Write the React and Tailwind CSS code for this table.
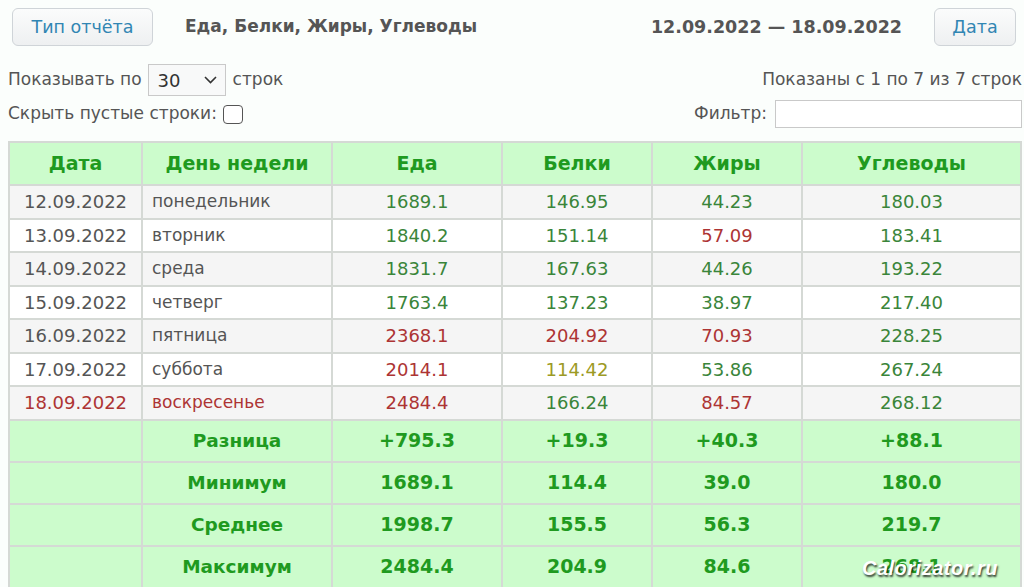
import React from 'react';

const GREEN = 'text-[#3a853a]';
const RED = 'text-[#ad3434]';
const OLIVE = 'text-[#9c9a25]';

// Строки отчёта: дата, день, значения и их цвета
const rows = [
  { date: '12.09.2022', day: 'понедельник', vals: ['1689.1', '146.95', '44.23', '180.03'], colors: [GREEN, GREEN, GREEN, GREEN] },
  { date: '13.09.2022', day: 'вторник', vals: ['1840.2', '151.14', '57.09', '183.41'], colors: [GREEN, GREEN, RED, GREEN] },
  { date: '14.09.2022', day: 'среда', vals: ['1831.7', '167.63', '44.26', '193.22'], colors: [GREEN, GREEN, GREEN, GREEN] },
  { date: '15.09.2022', day: 'четверг', vals: ['1763.4', '137.23', '38.97', '217.40'], colors: [GREEN, GREEN, GREEN, GREEN] },
  { date: '16.09.2022', day: 'пятница', vals: ['2368.1', '204.92', '70.93', '228.25'], colors: [RED, RED, RED, GREEN] },
  { date: '17.09.2022', day: 'суббота', vals: ['2014.1', '114.42', '53.86', '267.24'], colors: [RED, OLIVE, GREEN, GREEN] },
  { date: '18.09.2022', day: 'воскресенье', vals: ['2484.4', '166.24', '84.57', '268.12'], colors: [RED, GREEN, RED, GREEN], holiday: true },
];

const summary = [
  { label: 'Разница', vals: ['+795.3', '+19.3', '+40.3', '+88.1'] },
  { label: 'Минимум', vals: ['1689.1', '114.4', '39.0', '180.0'] },
  { label: 'Среднее', vals: ['1998.7', '155.5', '56.3', '219.7'] },
  { label: 'Максимум', vals: ['2484.4', '204.9', '84.6', '268.1'] },
];

const headers = ['Дата', 'День недели', 'Еда', 'Белки', 'Жиры', 'Углеводы'];

const TopButton = ({ children, className = '' }) => (
  <button className={`h-[38px] rounded-md border border-[#cfd4d8] bg-gradient-to-b from-[#fbfcfc] to-[#eef0f1] text-[17.5px] text-[#3186b3] ${className}`}>
    {children}
  </button>
);

export default function App() {
  return (
    <div className="relative h-[587px] w-[1024px] overflow-hidden bg-[#fbfefc] text-[#555] font-['DejaVu_Sans',Verdana,sans-serif]">
      {/* Верхняя панель */}
      <div className="flex items-center pl-3 pr-2 pt-[8px]">
        <TopButton className="w-[141px]">Тип отчёта</TopButton>
        <div className="ml-[32px] text-[17px] font-bold text-[#555]">Еда, Белки, Жиры, Углеводы</div>
        <div className="ml-auto text-[17.5px] font-bold text-[#555]">12.09.2022 — 18.09.2022</div>
        <TopButton className="ml-[32px] w-[82px]">Дата</TopButton>
      </div>

      {/* Настройки */}
      <div className="mt-[18px] flex items-center justify-between pl-2 pr-[2px] text-[17px]">
        <div className="flex items-center">
          <span>Показывать по</span>
          <div className="ml-[6px] flex h-[32px] w-[78px] items-center justify-between border border-[#c9c9c9] bg-[#f8f9f9] pl-[9px] pr-[8px] text-[18px] text-[#333]">
            <span>30</span>
            <svg width="13" height="8" viewBox="0 0 13 8" fill="none" stroke="#333" strokeWidth="1.6">
              <path d="M1 1l5.5 5.5L12 1" />
            </svg>
          </div>
          <span className="ml-[7px]">строк</span>
        </div>
        <span>Показаны с 1 по 7 из 7 строк</span>
      </div>
      <div className="mt-[4px] flex items-center justify-between pl-2 pr-[2px] text-[17px]">
        <div className="flex items-center">
          <span>Скрыть пустые строки:</span>
          <span className="ml-[6px] inline-block h-[19px] w-[20px] rounded-[4px] border-[1.5px] border-[#555] bg-white" />
        </div>
        <div className="flex items-center">
          <span>Фильтр:</span>
          <div className="ml-[8px] h-[28px] w-[247px] border border-[#c9c9c9] bg-white" />
        </div>
      </div>

      {/* Таблица */}
      <table className="ml-2 mt-[13px] w-[1014px] table-fixed border-collapse border-2 border-[#d5d9d5] text-[17px]">
        <colgroup>
          <col className="w-[133px]" />
          <col className="w-[190px]" />
          <col className="w-[170px]" />
          <col className="w-[150px]" />
          <col className="w-[150px]" />
          <col />
        </colgroup>
        <thead>
          <tr className="h-[43px] bg-[#ccfccc]">
            {headers.map((h) => (
              <th key={h} className="border-2 border-[#d5d9d5] text-center text-[19px] font-bold text-[#1f9a1f]">{h}</th>
            ))}
          </tr>
        </thead>
        <tbody>
          {rows.map((r, i) => (
            <tr key={r.date} className={`h-[33.5px] ${i % 2 === 0 ? 'bg-[#f5f5f5]' : 'bg-white'}`}>
              <td className={`border-2 border-[#d5d9d5] text-center text-[18px] ${r.holiday ? RED : 'text-[#555]'}`}>{r.date}</td>
              <td className={`border-2 border-[#d5d9d5] pl-[9px] ${r.holiday ? RED : 'text-[#555]'}`}>{r.day}</td>
              {r.vals.map((v, j) => (
                <td key={j} className={`border-2 border-[#d5d9d5] text-center text-[18px] ${r.colors[j]}`}>{v}</td>
              ))}
            </tr>
          ))}
          {summary.map((s) => (
            <tr key={s.label} className="h-[42px] bg-[#ccfccc] font-bold text-[#1f9a1f]">
              <td className="border-2 border-[#d5d9d5]" />
              <td className="border-2 border-[#d5d9d5] text-center text-[18.5px]">{s.label}</td>
              {s.vals.map((v, j) => (
                <td key={j} className="border-2 border-[#d5d9d5] text-center text-[19px]">{v}</td>
              ))}
            </tr>
          ))}
        </tbody>
      </table>

      {/* Водяной знак */}
      <div className="absolute left-[862px] top-[553px] text-[20px] font-bold italic tracking-[0.5px] text-white [text-shadow:1px_2px_2px_rgba(0,0,0,0.75)] font-['Liberation_Sans',Arial,sans-serif]">
        Calorizator.ru
      </div>
    </div>
  );
}
